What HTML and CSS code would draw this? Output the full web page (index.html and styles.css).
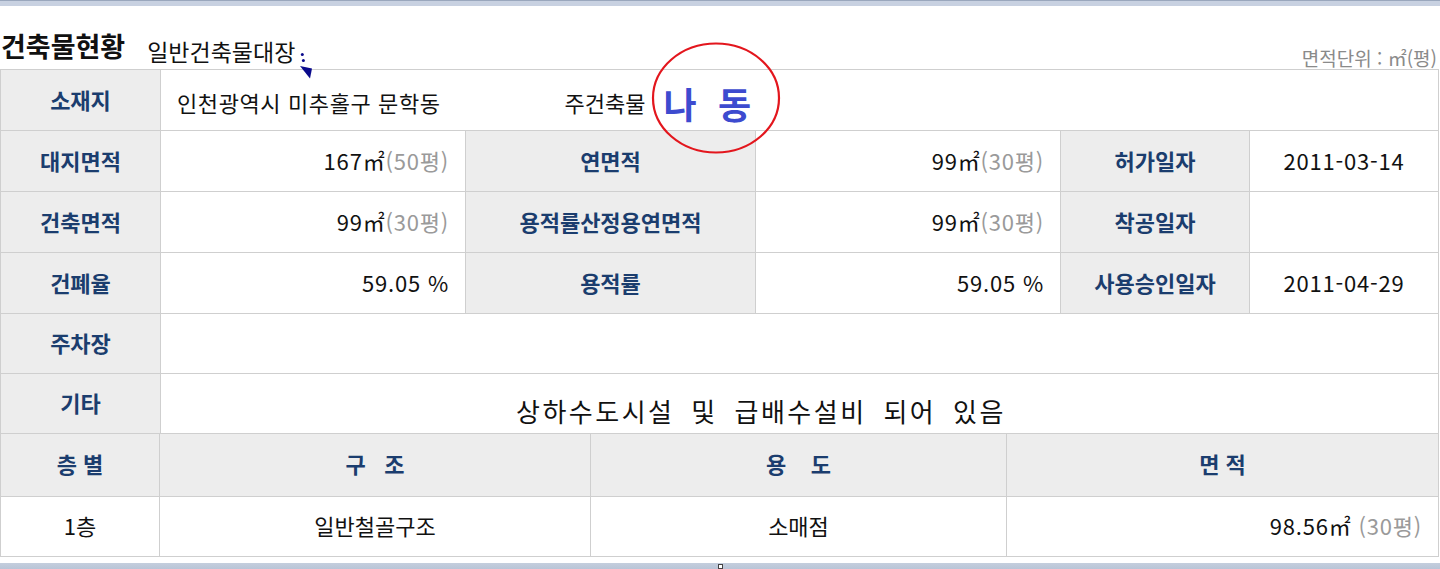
FILE: index.html
```html
<!DOCTYPE html>
<html lang="ko">
<head>
    <meta charset="UTF-8">
    <meta name="viewport" content="width=device-width, initial-scale=1.0">
    <title>건축물현황</title>
    <link rel="stylesheet" href="styles.css">
</head>
<body>
    <div class="top-band"></div>

    <main class="sheet">
        <header class="sheet-head">
            <h1>건축물현황</h1>
            <span class="register">일반건축물대장</span>
            <span class="unit">면적단위 : ㎡(평)</span>
        </header>

        <table class="info">
            <colgroup>
                <col style="width: 160px">
                <col style="width: 305px">
                <col style="width: 290px">
                <col style="width: 305px">
                <col style="width: 189px">
                <col style="width: 189px">
            </colgroup>
            <tr>
                <th>소재지</th>
                <td colspan="5" class="address">
                    <span>인천광역시 미추홀구 문학동</span><span class="main-bld">주건축물</span><span class="dong">나 동</span>
                </td>
            </tr>
            <tr>
                <th>대지면적</th>
                <td class="num">167㎡<span class="pyeong">(50평)</span></td>
                <th>연면적</th>
                <td class="num">99㎡<span class="pyeong">(30평)</span></td>
                <th>허가일자</th>
                <td class="date">2011-03-14</td>
            </tr>
            <tr>
                <th>건축면적</th>
                <td class="num">99㎡<span class="pyeong">(30평)</span></td>
                <th>용적률산정용연면적</th>
                <td class="num">99㎡<span class="pyeong">(30평)</span></td>
                <th>착공일자</th>
                <td class="date"></td>
            </tr>
            <tr>
                <th>건폐율</th>
                <td class="num">59.05 %</td>
                <th>용적률</th>
                <td class="num">59.05 %</td>
                <th>사용승인일자</th>
                <td class="date">2011-04-29</td>
            </tr>
            <tr class="short">
                <th>주차장</th>
                <td colspan="5"></td>
            </tr>
            <tr class="short">
                <th>기타</th>
                <td colspan="5" class="note">상하수도시설 및 급배수설비 되어 있음</td>
            </tr>
        </table>

        <table class="floors">
            <colgroup>
                <col style="width: 159px">
                <col style="width: 431px">
                <col style="width: 416px">
                <col style="width: 432px">
            </colgroup>
            <tr class="floors-head">
                <th>층 별</th>
                <th>구&nbsp;&nbsp;&nbsp;조</th>
                <th>용&nbsp;&nbsp;&nbsp;&nbsp;도</th>
                <th>면 적</th>
            </tr>
            <tr class="short">
                <td>1층</td>
                <td>일반철골구조</td>
                <td>소매점</td>
                <td class="num">98.56㎡ <span class="pyeong">(30평)</span></td>
            </tr>
        </table>

        <!-- hand-drawn marks on top of the sheet -->
        <svg class="mark-arrow" viewBox="0 0 20 32" width="20" height="32">
            <circle cx="6.3" cy="4.6" r="1.5" fill="#0a0a8c"/>
            <circle cx="7.4" cy="10.4" r="1.5" fill="#0a0a8c"/>
            <polygon points="4,16 16,18.5 14,28.5" fill="#0a0a8c"/>
        </svg>
        <svg class="mark-circle" viewBox="0 0 130 114" width="130" height="114">
            <ellipse cx="65" cy="56" rx="63" ry="54.5" fill="none" stroke="#e3161d" stroke-width="2.2"/>
        </svg>
    </main>

    <div class="bottom-band"><span class="handle"></span></div>
</body>
</html>
```

FILE: styles.css
```css
body {
    margin: 0;
    font-family: "Noto Sans CJK KR", "Noto Sans", sans-serif;
    color: #111;
    background-color: #fff;
}

.top-band {
    height: 5px;
    background-color: #c8d1e1;
    border-top: 1px solid #9aa7bd;
}

.bottom-band {
    height: 7px;
    margin-top: 6px;
    background: linear-gradient(#c4cedd, #b7c3d6);
    position: relative;
}

.handle {
    position: absolute;
    left: 718px;
    top: 1px;
    width: 3px;
    height: 3px;
    border: 1px solid #444;
    background-color: #fff;
}

.sheet {
    position: relative;
    width: 1439px;
}

.sheet-head {
    display: flex;
    align-items: flex-start;
    height: 63px;
}

.sheet-head > h1 {
    margin: 26px 0 0 1px;
    font-size: 27px;
    line-height: 27px;
    font-weight: 700;
    color: #111;
}

.register {
    margin: 34px 0 0 22px;
    font-size: 23px;
    line-height: 23px;
}

.unit {
    margin: 42px 2px 0 auto;
    font-size: 19px;
    line-height: 19px;
    color: #8a8a8a;
}

table {
    width: 1439px;
    border-collapse: collapse;
    table-layout: fixed;
    font-size: 22px;
    line-height: 24px;
}

th, td {
    border: 1px solid #cfcfcf;
    height: 61px;
    padding: 0 16px 3px;
    box-sizing: border-box;
    white-space: nowrap;
}

tr.short > th, tr.short > td {
    height: 60px;
}

th {
    background-color: #ededed;
    color: #1b3d6e;
    font-weight: 700;
    text-align: center;
}

td {
    text-align: left;
}

.num, .date {
    letter-spacing: 0.8px;
}

.num {
    text-align: right;
}

.date {
    text-align: center;
}

.pyeong {
    color: #9a9a9a;
}

.address {
    padding-left: 16px;
    letter-spacing: 0.6px;
}

.main-bld {
    margin-left: 124px;
    letter-spacing: 0;
}

.dong {
    position: relative;
    top: 7px;
    margin-left: 18px;
    font-size: 36px;
    font-weight: 700;
    color: #3d4bcf;
    word-spacing: 10px;
}

.note {
    font-size: 26px;
    letter-spacing: 2.5px;
    word-spacing: 7px;
    padding-left: 355px;
    padding-top: 14px;
    padding-bottom: 0;
}

.floors {
    border-top: none;
}

.floors-head > th {
    border-top: none;
    height: 62px;
}

.floors td {
    text-align: center;
}

.floors td.num {
    text-align: right;
}

.mark-arrow {
    position: absolute;
    left: 296px;
    top: 44px;
}

.mark-circle {
    position: absolute;
    left: 651px;
    top: 36px;
}
```
